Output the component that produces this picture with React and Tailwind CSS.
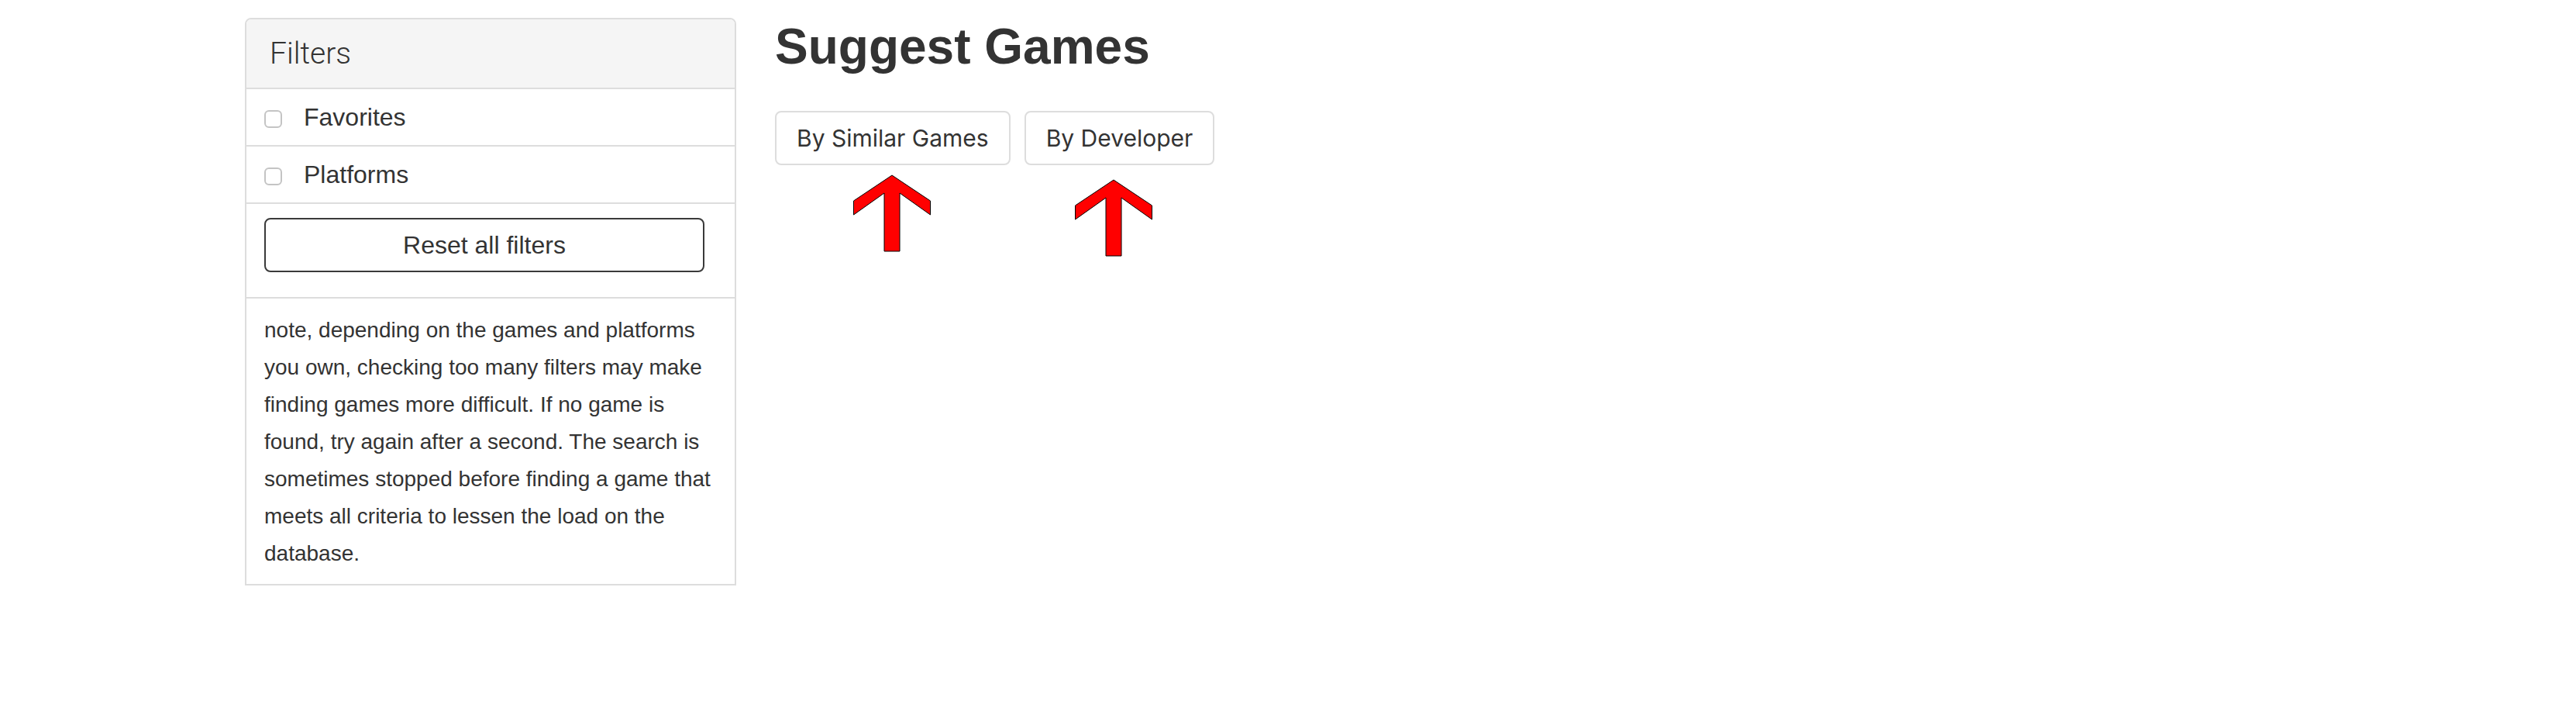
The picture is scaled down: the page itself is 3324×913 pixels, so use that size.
import React from "react";

const sans = "font-['Liberation_Sans',Arial,sans-serif]";

function Arrow({ className }) {
  return (
    <svg
      className={className}
      width="100"
      height="100"
      viewBox="0 0 100 100"
    >
      <polygon
        points="50,1 99.5,34 99.5,52 60,24 60,99 40,99 40,24 0.5,52 0.5,34"
        fill="#ff0000"
        stroke="#000"
        strokeWidth="1"
      />
    </svg>
  );
}

function FilterRow({ label }) {
  return (
    <div className="flex items-center h-[74px] pl-[23px] border-b-2 border-[#dddddd]">
      <span className="mt-[4px] w-[23px] h-[23px] rounded-[6px] border-2 border-[#c4c4c4] bg-white"></span>
      <span className="ml-[28px] text-[32px] leading-none text-[#333]">{label}</span>
    </div>
  );
}

export default function App() {
  return (
    <div className={`min-h-screen bg-white text-[#333] ${sans}`}>
      <div className="flex items-start pl-[316px] pt-[23px]">
        {/* filters panel */}
        <div className="w-[634px] border-2 border-[#dddddd] rounded-t-[8px]">
          <div className="flex items-center h-[90px] pl-[30px] bg-[#f5f5f5] border-b-2 border-[#dddddd] rounded-t-[6px]">
            <span className="font-['Roboto',sans-serif] font-light text-[39px] leading-none text-[#333]">
              Filters
            </span>
          </div>
          <FilterRow label="Favorites" />
          <FilterRow label="Platforms" />
          <div className="flex pt-[18px] pb-[32px] pl-[23px] border-b-2 border-[#dddddd]">
            <button className="w-[568px] h-[70px] rounded-[8px] border-2 border-[#3a3a3a] bg-white text-[32px] text-[#333]">
              Reset all filters
            </button>
          </div>
          <p className="px-[23px] pt-[17px] pb-[15px] text-[28px] leading-[48px] text-[#333]">
            note, depending on the games and platforms you own, checking too many
            filters may make finding games more difficult. If no game is found,
            try again after a second. The search is sometimes stopped before
            finding a game that meets all criteria to lessen the load on the
            database.
          </p>
        </div>

        {/* suggestions */}
        <div className="relative ml-[50px]">
          <h1 className="mt-[2px] text-[64px] leading-[70px] font-bold text-[#333]">
            Suggest Games
          </h1>
          <div className="flex gap-[18px] mt-[48px]">
            <button className="h-[70px] px-[26px] rounded-[8px] border-2 border-[#dddddd] bg-white font-['Inter',sans-serif] text-[30px] text-[#333]">
              By Similar Games
            </button>
            <button className="h-[70px] px-[26px] rounded-[8px] border-2 border-[#dddddd] bg-white font-['Inter',sans-serif] text-[30px] text-[#333]">
              By Developer
            </button>
          </div>
          <Arrow className="absolute left-[101px] top-[202px]" />
          <Arrow className="absolute left-[387px] top-[208px]" />
        </div>
      </div>
    </div>
  );
}
